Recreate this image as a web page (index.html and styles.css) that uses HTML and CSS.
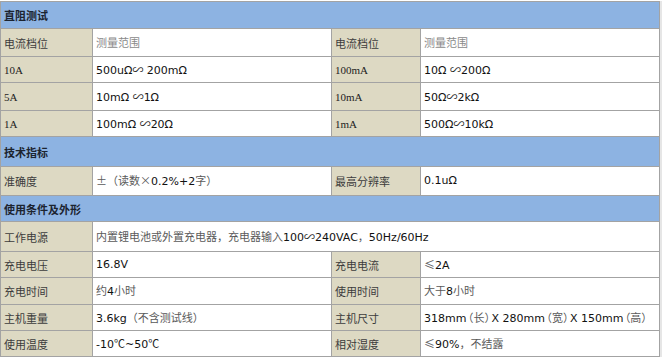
FILE: index.html
```html
<!DOCTYPE html>
<html lang="zh-CN">
<head>
<meta charset="utf-8">
<title>参数</title>
<link rel="stylesheet" href="styles.css">
</head>
<body>
<table class="spec">
  <colgroup>
    <col class="c1"><col class="c2"><col class="c3"><col class="c4">
  </colgroup>
  <tr class="h27"><th colspan="4" class="sec">直阻测试</th></tr>
  <tr class="h28">
    <td class="lab">电流档位</td><td class="val"><span class="lt">测量范围</span></td>
    <td class="lab">电流档位</td><td class="val"><span class="lt">测量范围</span></td>
  </tr>
  <tr class="h26">
    <td class="lab"><span class="sf">10A</span></td><td class="val">500uΩ<span class="wv">∽</span> 200mΩ</td>
    <td class="lab"><span class="sf">100mA</span></td><td class="val">10Ω <span class="wv">∽</span>200Ω</td>
  </tr>
  <tr class="h28">
    <td class="lab"><span class="sf">5A</span></td><td class="val">10mΩ <span class="wv">∽</span>1Ω</td>
    <td class="lab"><span class="sf">10mA</span></td><td class="val">50Ω<span class="wv">∽</span>2kΩ</td>
  </tr>
  <tr class="h26">
    <td class="lab"><span class="sf">1A</span></td><td class="val">100mΩ <span class="wv">∽</span>20Ω</td>
    <td class="lab"><span class="sf">1mA</span></td><td class="val">500Ω<span class="wv">∽</span>10kΩ</td>
  </tr>
  <tr class="h30"><th colspan="4" class="sec">技术指标</th></tr>
  <tr class="h29">
    <td class="lab">准确度</td><td class="val"><span class="cj">±（读数×</span>0.2%+2<span class="cj">字）</span></td>
    <td class="lab">最高分辨率</td><td class="val">0.1uΩ</td>
  </tr>
  <tr class="h26"><th colspan="4" class="sec">使用条件及外形</th></tr>
  <tr class="h30">
    <td class="lab">工作电源</td>
    <td class="val" colspan="3"><span class="cj">内置锂电池或外置充电器，充电器输入</span>100<span class="wv">∽</span>240VAC<span class="cj">，</span>50Hz/60Hz</td>
  </tr>
  <tr class="h26">
    <td class="lab">充电电压</td><td class="val">16.8V</td>
    <td class="lab">充电电流</td><td class="val"><span class="cj">≤</span>2A</td>
  </tr>
  <tr class="h27">
    <td class="lab">充电时间</td><td class="val"><span class="cj">约</span>4<span class="cj">小时</span></td>
    <td class="lab">使用时间</td><td class="val"><span class="cj">大于</span>8<span class="cj">小时</span></td>
  </tr>
  <tr class="h26">
    <td class="lab">主机重量</td><td class="val">3.6kg<span class="cj">（不含测试线）</span></td>
    <td class="lab">主机尺寸</td><td class="val">318mm<span class="cj pr">（长）</span>X 280mm<span class="cj pr">（宽）</span>X 150mm<span class="cj pr">（高）</span></td>
  </tr>
  <tr class="h26">
    <td class="lab">使用温度</td><td class="val">-10<span class="dg">℃</span>~50<span class="dg">℃</span></td>
    <td class="lab">相对湿度</td><td class="val"><span class="cj">≤</span>90%<span class="cj">，不结露</span></td>
  </tr>
</table>
</body>
</html>
```
FILE: styles.css
```css
html, body {
  margin: 0;
  padding: 0;
  background: #ffffff;
}
body {
  padding-top: 1px;
}
.spec {
  border-collapse: collapse;
  width: 659px;
  table-layout: fixed;
  border: 1px solid #7a7a7a;
  font-family: "DejaVu Sans", "Noto Sans CJK SC", sans-serif;
  font-size: 11px;
  color: #111;
  box-shadow: 2px 0 0 #e6e6e6;
}
.c1 { width: 92px; }
.c2 { width: 239px; }
.c3 { width: 89px; }
.c4 { width: 239px; }
.spec td, .spec th {
  border: 1px solid #a3a3a3;
  padding: 0 0 0 3px;
  vertical-align: middle;
  text-align: left;
  white-space: nowrap;
  overflow: hidden;
  line-height: 14px;
}
.h26 { height: 26px; }
.h27 { height: 27px; }
.h28 { height: 28px; }
.h29 { height: 29px; }
.h30 { height: 30px; }
.sec {
  background: #8db3e2;
  font-family: "Noto Sans CJK SC", sans-serif;
  font-weight: bold;
  font-size: 11px;
  color: #1c2430;
}
.lab {
  background: #ddd9c3;
  font-family: "Noto Sans CJK SC", sans-serif;
  color: #3c3c3c;
}
.val {
  background: #ffffff;
}
.sf {
  font-family: "Liberation Serif", serif;
  font-size: 11px;
  color: #222;
}
.lt {
  font-family: "Noto Sans CJK SC", sans-serif;
  color: #8a8a8a;
}
.cj {
  font-family: "Noto Sans CJK SC", sans-serif;
  color: #5a5a5a;
}
.wv {
  font-family: "Noto Sans CJK SC", sans-serif;
  color: #222;
}
.pr {
  display: inline-block;
  margin: 0 -4px;
}
.dg {
  font-family: "Noto Sans CJK SC", sans-serif;
  color: #222;
}
```
